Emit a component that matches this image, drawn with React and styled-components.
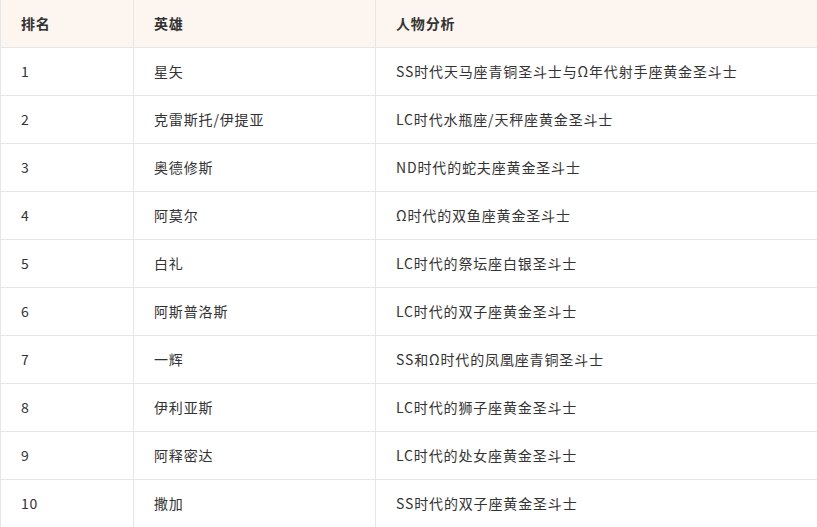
import React from 'react'
import styled, { createGlobalStyle } from 'styled-components';

const GlobalStyle = createGlobalStyle`
    html, body {
        margin: 0;
        padding: 0;
        background: #ffffff;
        overflow: hidden;
    }
    body {
        font-family: "Noto Sans CJK SC", "Noto Sans", sans-serif;
        color: #333333;
    }
`;

const rows = [
    ['1', '星矢', 'SS时代天马座青铜圣斗士与Ω年代射手座黄金圣斗士'],
    ['2', '克雷斯托/伊提亚', 'LC时代水瓶座/天秤座黄金圣斗士'],
    ['3', '奥德修斯', 'ND时代的蛇夫座黄金圣斗士'],
    ['4', '阿莫尔', 'Ω时代的双鱼座黄金圣斗士'],
    ['5', '白礼', 'LC时代的祭坛座白银圣斗士'],
    ['6', '阿斯普洛斯', 'LC时代的双子座黄金圣斗士'],
    ['7', '一辉', 'SS和Ω时代的凤凰座青铜圣斗士'],
    ['8', '伊利亚斯', 'LC时代的狮子座黄金圣斗士'],
    ['9', '阿释密达', 'LC时代的处女座黄金圣斗士'],
    ['10', '撒加', 'SS时代的双子座黄金圣斗士'],
];

const TableStyled = styled.table`
    border-collapse: collapse;
    table-layout: fixed;
    width: 830px;
    font-size: 14px;
    letter-spacing: 0.85px;

    th, td {
        border: 1px solid #e6e6e6;
        height: 48px;
        padding: 0 20px;
        text-align: left;
        vertical-align: middle;
        line-height: 20px;
        box-sizing: border-box;
    }

    tr:first-child th {
        border-top: none;
        height: 47px;
    }

    th {
        background-color: #fcf5f0;
        font-weight: bold;
        color: #333333;
    }

    td {
        color: #333333;
        font-weight: normal;
    }
`;

const Col = styled.col`
    width: ${props => props.$w}px;
`;

const App = () => {
    return <>
        <GlobalStyle />
        <TableStyled>
            <colgroup>
                <Col $w={133} />
                <Col $w={242} />
                <Col $w={455} />
            </colgroup>
            <thead>
                <tr>
                    <th>排名</th>
                    <th>英雄</th>
                    <th>人物分析</th>
                </tr>
            </thead>
            <tbody>
                {rows.map(([rank, hero, desc]) => <tr key={rank}>
                    <td>{rank}</td>
                    <td>{hero}</td>
                    <td>{desc}</td>
                </tr>)}
            </tbody>
        </TableStyled>
    </>
}

export default App;
